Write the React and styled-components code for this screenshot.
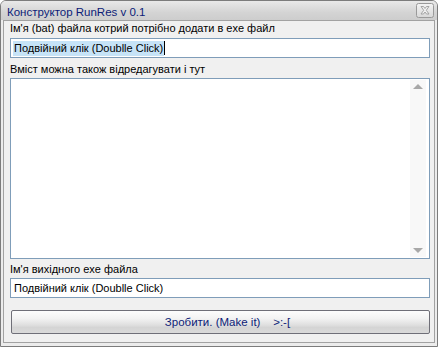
import React from 'react';
import styled, { createGlobalStyle } from 'styled-components';

const GlobalStyle = createGlobalStyle`
  body {
    margin: 0;
    background: #ffffff;
    font-family: "Liberation Sans", Arial, sans-serif;
  }
`;

const Window = styled.div`
  width: 438px;
  height: 347px;
  box-sizing: border-box;
  display: flex;
  flex-direction: column;
  border: 1px solid #7c7c7c;
  border-radius: 6px 6px 0 0;
  background: #ececec;
  overflow: hidden;
`;

const TitleBar = styled.div`
  height: 19px;
  flex-shrink: 0;
  display: flex;
  align-items: center;
  justify-content: space-between;
  padding: 0 3px 0 6px;
  background: linear-gradient(#e9e9e9, #d4d4d4 60%, #cdcdcd);
`;

const Title = styled.span`
  font-size: 11.5px;
  color: #0c1c78;
  padding-top: 2px;
`;

const Client = styled.div`
  flex: 1;
  margin: 0 2px 3px 2px;
  border: 1px solid #a2a2a2;
  background: #f0f0f0;
  display: flex;
  flex-direction: column;
  padding: 0 4px 0 6px;
`;

const Label = styled.div`
  font-size: 11px;
  color: #000;
  height: 14px;
  line-height: 14px;
  margin: ${p => p.$top}px 0 ${p => p.$bottom}px 0;
`;

const TextBox = styled.div`
  height: 20px;
  box-sizing: border-box;
  border: 1px solid #7f9db9;
  background: #fff;
  display: flex;
  align-items: center;
  padding-left: 3px;
  font-size: 11px;
  color: #000;
`;

const Selected = styled.span`
  background: #c6e3f7;
  padding: 1px 1px;
  margin-left: -1px;
  line-height: 13px;
`;

const Caret = styled.span`
  width: 1px;
  height: 14px;
  background: #000;
`;

const TextArea = styled.div`
  height: 181px;
  box-sizing: border-box;
  border: 1px solid #7f9db9;
  background: #fff;
  display: flex;
  justify-content: flex-end;
  padding: 1px 3px 1px 0;
`;

const ScrollTrack = styled.div`
  width: 16px;
  background: #f8f8f8;
  display: flex;
  flex-direction: column;
  justify-content: space-between;
  align-items: center;
  padding: 4px 0;
`;

const Arrow = styled.div`
  width: 0;
  height: 0;
  border-left: 5px solid transparent;
  border-right: 5px solid transparent;
  ${p => p.$down
    ? 'border-top: 5px solid #a8a8a8;'
    : 'border-bottom: 5px solid #a8a8a8;'}
`;

const Button = styled.div`
  margin: 12px 0 0 1px;
  height: 24px;
  box-sizing: border-box;
  border: 1px solid #6f6f78;
  border-radius: 2px;
  background: linear-gradient(#fdfdfd, #f2f2f2 35%, #dedede 65%, #d4d4d4 75%, #dadada);
  display: flex;
  align-items: center;
  justify-content: center;
  font-size: 11.5px;
  color: #0c1c78;
  white-space: pre;
  padding-left: 14px;
`;

const CloseIcon = () => (
  <svg width="18" height="15" viewBox="0 0 18 15">
    <defs>
      <linearGradient id="cg" x1="0" y1="0" x2="0" y2="1">
        <stop offset="0" stopColor="#f4f4f4" />
        <stop offset="1" stopColor="#d8d8d8" />
      </linearGradient>
    </defs>
    <rect x="0.5" y="0.5" width="17" height="14" rx="2" fill="url(#cg)" stroke="#9a9a9a" />
    <path
      d="M5 3.5 L7.5 3.5 L9 5.5 L10.5 3.5 L13 3.5 L10.3 7.3 L13 11 L10.5 11 L9 9 L7.5 11 L5 11 L7.7 7.3 Z"
      fill="#f2f2f2"
      stroke="#9c9c9c"
      strokeWidth="0.9"
    />
  </svg>
);

export default function App() {
  return (
    <>
      <GlobalStyle />
      <Window>
        <TitleBar>
          <Title>Конструктор RunRes v 0.1</Title>
          <CloseIcon />
        </TitleBar>
        <Client>
          <Label $top={0} $bottom={3}>Ім'я (bat) файла котрий потрібно додати в exe файл</Label>
          <TextBox>
            <Selected>Подвійний клік (Doublle Click)</Selected>
            <Caret />
          </TextBox>
          <Label $top={4} $bottom={2}>Вміст можна також відредагувати і тут</Label>
          <TextArea>
            <ScrollTrack>
              <Arrow />
              <Arrow $down />
            </ScrollTrack>
          </TextArea>
          <Label $top={3} $bottom={2}>Ім'я вихідного exe файла</Label>
          <TextBox>Подвійний клік (Doublle Click)</TextBox>
          <Button>Зробити. (Make it)    &gt;:-[</Button>
        </Client>
      </Window>
    </>
  );
}
